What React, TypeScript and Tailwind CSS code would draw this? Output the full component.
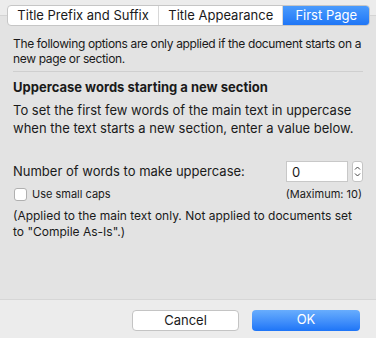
import React, { useState } from "react";

const font = { fontFamily: "Inter, 'Liberation Sans', sans-serif" };

export default function App() {
  const [tab, setTab] = useState(2);
  const [count, setCount] = useState("0");
  const [smallCaps, setSmallCaps] = useState(false);
  const tabs = ["Title Prefix and Suffix", "Title Appearance", "First Page"];

  return (
    <div className="w-[376px] h-[338px] bg-[#ececec] text-[#1a1a1a] flex flex-col" style={font}>
      <div className="relative h-[299px] pt-[15px]">
        <div className="h-full bg-[#e3e3e3] border-t border-[#d4d4d4]">
          <div className="px-[13px] pt-[20px]">
            <p className="-mr-[8px] text-[12px] leading-[15px] tracking-[-0.35px]">
              The following options are only applied if the document starts on a new page or section.
            </p>
            <div className="mt-[5px] h-px bg-[#cfcfcf]" />
            <h2 className="mt-[7px] text-[13px] font-bold leading-[16px]">Uppercase words starting a new section</h2>
            <p className="mt-[6px] text-[13px] leading-[18px]">
              To set the first few words of the main text in uppercase when the text starts a new section, enter a value below.
            </p>
            <div className="mt-[24px] flex items-center">
              <span className="flex-1 text-[13px]">Number of words to make uppercase:</span>
              <input
                value={count}
                onChange={(e) => setCount(e.target.value)}
                className="w-[62px] h-[21px] bg-white border border-[#c8c8c8] px-[5px] text-[13px] outline-none"
              />
              <div className="ml-[4px] w-[11px] h-[21px] bg-white border border-[#c4c4c4] rounded-[3px] flex flex-col items-center justify-center">
                <svg width="7" height="15" viewBox="0 0 7 15">
                  <path d="M1 5.5 L3.5 3 L6 5.5 M1 9.5 L3.5 12 L6 9.5" fill="none" stroke="#444" strokeWidth="1" />
                </svg>
              </div>
            </div>
            <div className="mt-[4px] flex items-center text-[11px]">
              <label className="flex flex-1 items-center gap-[5px]">
                <input
                  type="checkbox"
                  checked={smallCaps}
                  onChange={(e) => setSmallCaps(e.target.checked)}
                  className="appearance-none w-[13px] h-[13px] bg-white border border-[#b0b0b0] rounded-[3px] ml-[1px]"
                />
                <span>Use small caps</span>
              </label>
              <span className="mr-[1px]">(Maximum: 10)</span>
            </div>
            <p className="mt-[5px] text-[12px] leading-[16px]">
              (Applied to the main text only. Not applied to documents set to "Compile As-Is".)
            </p>
          </div>
        </div>
        <div className="absolute left-[7px] top-[5px] w-[363px] h-[21px] flex bg-white border border-[#c6c6c6] rounded-[4px] overflow-hidden text-[13px]">
          {tabs.map((t, i) => (
            <button
              key={t}
              onClick={() => setTab(i)}
              className={
                i === tab
                  ? "flex items-center justify-center bg-gradient-to-b from-[#4a9bfd] to-[#1f76f6] text-white"
                  : "flex items-center justify-center border-r border-[#d8d8d8] text-[#1a1a1a]"
              }
              style={{ width: i === 0 ? 152 : i === 1 ? 125 : 86 }}
            >
              {t}
            </button>
          ))}
        </div>
      </div>
      <div className="flex-1 border-t border-[#d6d6d6] flex items-center justify-end gap-[13px] pr-[16px] pt-[2px]">
        <button className="w-[107px] h-[21px] bg-white border border-[#c4c4c4] rounded-[4px] text-[13px]">Cancel</button>
        <button className="w-[108px] h-[21px] rounded-[4px] text-[13px] text-white bg-gradient-to-b from-[#68adfd] to-[#1c74f7]">OK</button>
      </div>
    </div>
  );
}
